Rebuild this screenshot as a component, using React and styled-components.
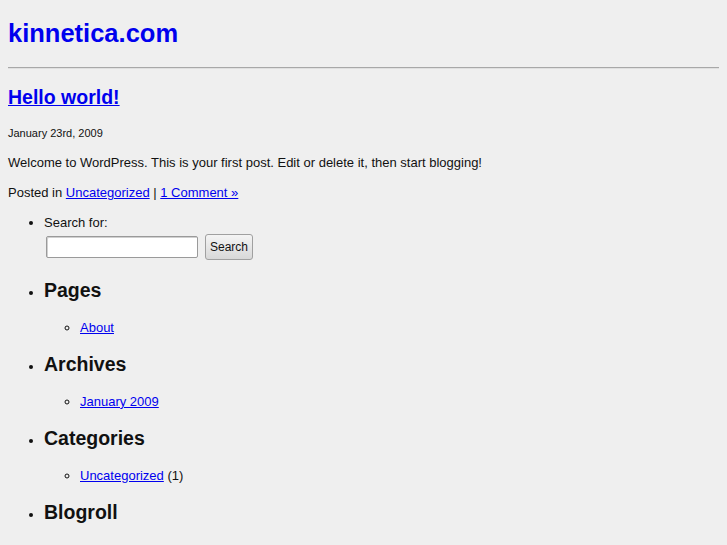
import React from "react";
import styled, { createGlobalStyle } from "styled-components";

const GlobalStyle = createGlobalStyle`
  html, body {
    margin: 0;
    background: #efefef;
  }
  body {
    padding: 8px;
    font-family: "Liberation Sans", Arial, sans-serif;
    font-size: 13px;
    color: #111;
  }
`;

const Page = styled.div`
  display: flex;
  flex-direction: column;
`;

const SiteTitle = styled.h1`
  margin: 10px 0 0;
  font-size: 25.5px;
  line-height: 30px;
  font-weight: bold;
  a {
    color: #0000ee;
    text-decoration: none;
  }
`;

const Rule = styled.hr`
  margin: 19px 0 0;
  height: 0;
  border: none;
  border-top: 1px solid #a8a8a8;
  border-bottom: 1px solid #e0e0e0;
`;

const PostTitle = styled.h2`
  margin: 17px 0 0;
  font-size: 19.5px;
  line-height: 22px;
  font-weight: bold;
  a {
    color: #0000ee;
  }
`;

const PostDate = styled.small`
  display: block;
  margin-top: 19px;
  font-size: 11px;
  line-height: 13px;
`;

const Text = styled.p`
  margin: 15px 0 0;
  line-height: 15px;
  a {
    color: #0000ee;
  }
`;

const Sidebar = styled.ul`
  margin: 15px 0 0;
  padding-left: 36px;
  list-style: disc;
`;

const Widget = styled.li`
  margin-top: ${({ $gap }) => $gap || 0}px;
  line-height: 15px;
`;

const WidgetTitle = styled.h2`
  margin: 0;
  font-size: 19.5px;
  line-height: 22px;
  font-weight: bold;
`;

const SubList = styled.ul`
  margin: 18.5px 0 0;
  padding-left: 36px;
  list-style: circle;
  li {
    line-height: 15px;
  }
  a {
    color: #0000ee;
  }
`;

const SearchRow = styled.div`
  display: flex;
  align-items: center;
  gap: 7px;
  margin-top: 4px;
  margin-left: 2px;
`;

const SearchInput = styled.input`
  box-sizing: border-box;
  width: 152px;
  height: 22px;
  border: 1px solid #9a9a9a;
  border-radius: 2px;
  background: #fff;
  box-shadow: inset 1px 1px 0 #d0d0d0;
`;

const SearchButton = styled.button`
  box-sizing: border-box;
  width: 48px;
  height: 26px;
  padding: 0;
  font-family: "Liberation Sans", Arial, sans-serif;
  font-size: 12px;
  color: #111;
  border: 1px solid #a0a0a0;
  border-radius: 3px;
  background: linear-gradient(#f4f4f4, #d8d8d8);
`;

const widgets = [
  { title: "Pages", items: [{ label: "About" }] },
  { title: "Archives", items: [{ label: "January 2009" }] },
  { title: "Categories", items: [{ label: "Uncategorized", count: "(1)" }] },
];

export default function App() {
  return (
    <Page>
      <GlobalStyle />
      <SiteTitle>
        <a href="#">kinnetica.com</a>
      </SiteTitle>
      <Rule />
      <PostTitle>
        <a href="#">Hello world!</a>
      </PostTitle>
      <PostDate>January 23rd, 2009</PostDate>
      <Text>
        Welcome to WordPress. This is your first post. Edit or delete it, then
        start blogging!
      </Text>
      <Text>
        Posted in <a href="#">Uncategorized</a> | <a href="#">1 Comment »</a>
      </Text>
      <Sidebar>
        <Widget>
          Search for:
          <SearchRow>
            <SearchInput type="text" />
            <SearchButton>Search</SearchButton>
          </SearchRow>
        </Widget>
        {widgets.map((w, i) => (
          <Widget key={w.title} $gap={i === 0 ? 19 : 18.5}>
            <WidgetTitle>{w.title}</WidgetTitle>
            <SubList>
              {w.items.map((it) => (
                <li key={it.label}>
                  <a href="#">{it.label}</a>
                  {it.count ? ` ${it.count}` : ""}
                </li>
              ))}
            </SubList>
          </Widget>
        ))}
        <Widget $gap={18.5}>
          <WidgetTitle>Blogroll</WidgetTitle>
        </Widget>
      </Sidebar>
    </Page>
  );
}
